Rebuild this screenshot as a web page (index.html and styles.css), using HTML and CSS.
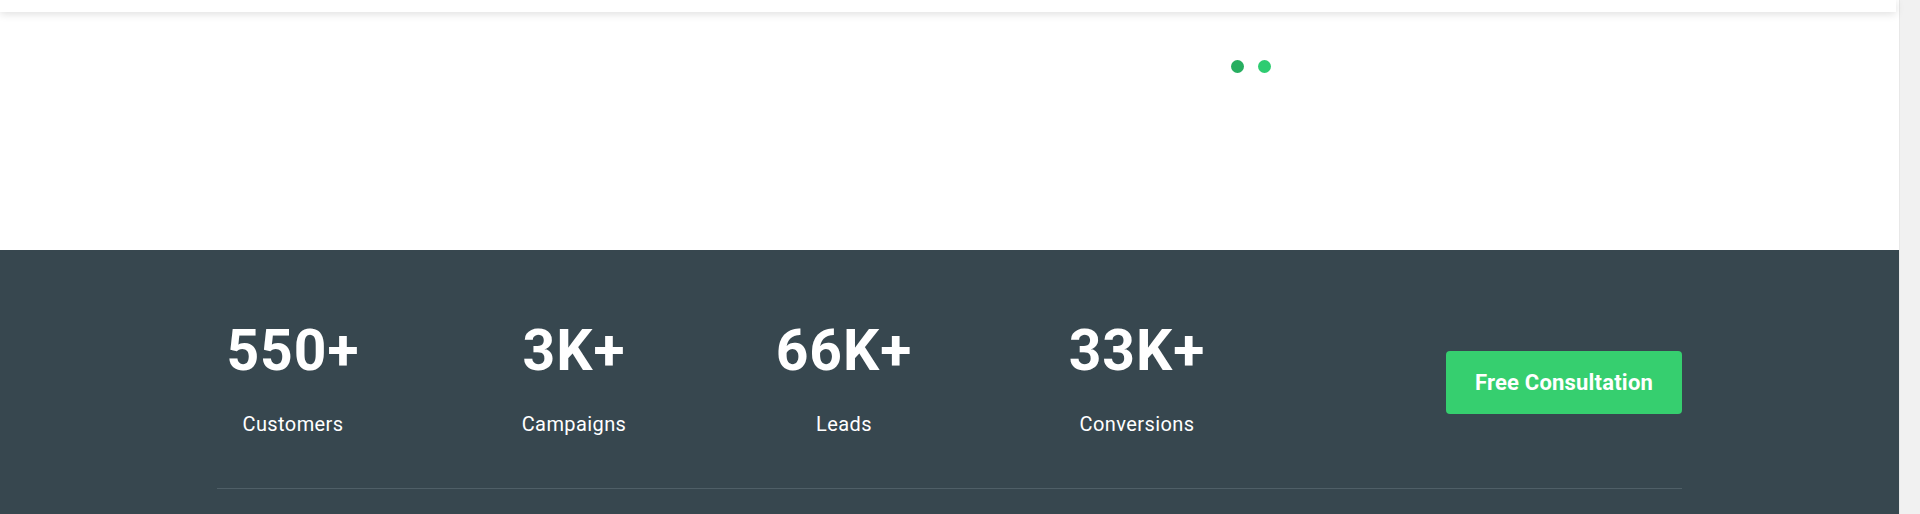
FILE: index.html
```html
<!DOCTYPE html>
<html lang="en">
<head>
<meta charset="utf-8">
<title>Stats</title>
<link rel="stylesheet" href="styles.css">
</head>
<body>
<div class="page">
  <main class="main">
    <header class="header"></header>
    <section class="hero">
      <div class="container">
        <div class="dots">
          <span class="dot dot-active"></span>
          <span class="dot"></span>
        </div>
      </div>
    </section>
    <section class="stats-band">
      <div class="container">
        <div class="stats-row">
          <div class="stats">
            <div class="stat stat-1"><div class="num">550+</div><div class="label">Customers</div></div>
            <div class="stat stat-2"><div class="num">3K+</div><div class="label">Campaigns</div></div>
            <div class="stat stat-3"><div class="num">66K+</div><div class="label">Leads</div></div>
            <div class="stat stat-4"><div class="num">33K+</div><div class="label">Conversions</div></div>
          </div>
          <a class="cta" href="#">Free Consultation</a>
        </div>
        <hr class="rule">
      </div>
    </section>
  </main>
  <div class="scrollbar"></div>
</div>
</body>
</html>
```
FILE: styles.css
```css
html, body {
  margin: 0;
  padding: 0;
  height: 514px;
  overflow: hidden;
}
body {
  font-family: Roboto, "Liberation Sans", Arial, sans-serif;
  background: #ffffff;
}
.page {
  display: flex;
  height: 514px;
}
.main {
  width: 1899px;
  display: flex;
  flex-direction: column;
  background: #ffffff;
}
.scrollbar {
  flex: 1;
  background: #f1f1f1;
  border-left: 1px solid #e8e8e8;
}
.header {
  height: 12px;
  background: #ffffff;
  box-shadow: 0 2px 9px rgba(0, 0, 0, 0.13);
  position: relative;
  z-index: 2;
  margin-right: 3px;
}
.container {
  width: 1465px;
  margin-left: 217px;
}
.hero {
  height: 238px;
}
.dots {
  display: flex;
  gap: 14px;
  padding-top: 48px;
  padding-left: 1014px;
}
.dot {
  width: 13px;
  height: 13px;
  border-radius: 50%;
  background: #2ecc71;
}
.dot-active {
  background: #27ae60;
}
.stats-band {
  flex: 1;
  background: #37474f;
}
.stats-row {
  display: flex;
  align-items: flex-start;
  justify-content: space-between;
  padding-top: 72px;
}
.stats {
  display: flex;
  color: #ffffff;
  text-align: center;
}
.stat {
  width: 152px;
}
.stat-2 { margin-left: 129px; }
.stat-3 { margin-left: 118px; }
.stat-4 { margin-left: 141px; }
.num {
  font-size: 57px;
  line-height: 57px;
  font-weight: 700;
  letter-spacing: 1px;
}
.label {
  margin-top: 33px;
  font-size: 20px;
  line-height: 24px;
  font-weight: 400;
  letter-spacing: 0.4px;
}
.cta {
  margin-top: 29px;
  width: 236px;
  height: 63px;
  display: flex;
  align-items: center;
  justify-content: center;
  background: #36cf6f;
  color: #ffffff;
  font-size: 22px;
  font-weight: 700;
  letter-spacing: 0.2px;
  text-decoration: none;
  border-radius: 4px;
}
.rule {
  margin: 52px 0 0;
  border: 0;
  height: 1px;
  background: #4f5f67;
}
```
